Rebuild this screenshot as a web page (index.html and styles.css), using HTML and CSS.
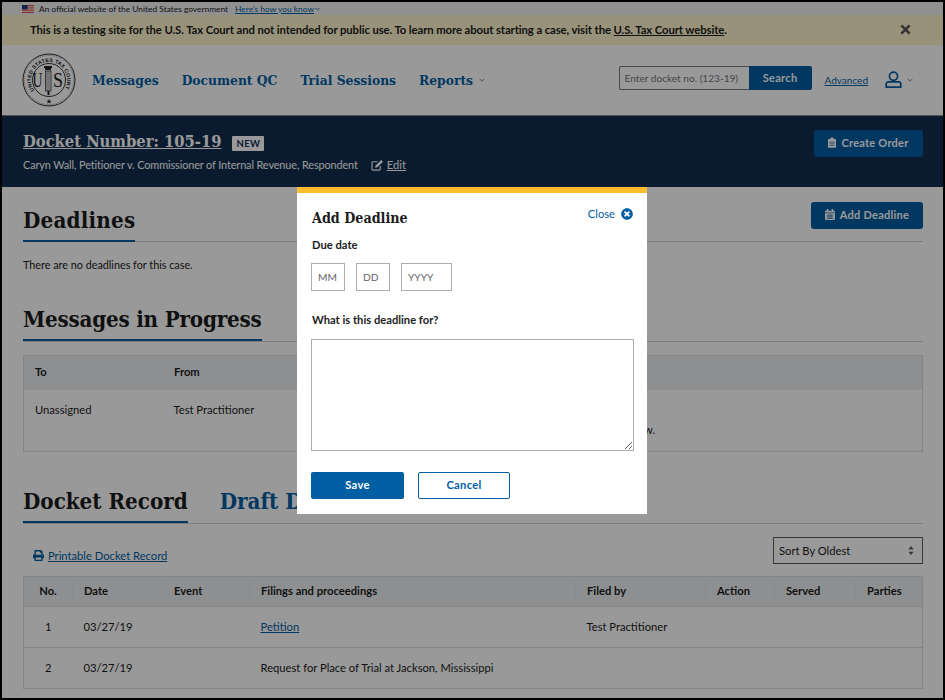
FILE: index.html
```html
<!DOCTYPE html>
<html lang="en">
<head>
<meta charset="utf-8">
<title>Docket 105-19</title>
<link rel="stylesheet" href="styles.css">
</head>
<body>
<div class="page">
  <div class="gov">
    <svg class="flag" viewBox="0 0 14 9" width="12" height="8"><rect width="14" height="9" fill="#d83933"/><rect y="1.3" width="14" height="1.3" fill="#fff"/><rect y="3.9" width="14" height="1.3" fill="#fff"/><rect y="6.5" width="14" height="1.3" fill="#fff"/><rect width="6.5" height="5" fill="#1a3a8a"/></svg>
    <span>An official website of the United States government</span>
    <a href="#" class="gov-link">Here’s how you know</a>
    <svg class="chev-tiny" viewBox="0 0 10 6" width="5" height="4"><path d="M1 1l4 4 4-4" fill="none" stroke="#005ea2" stroke-width="1.6"/></svg>
  </div>
  <div class="beta">
    <p>This is a testing site for the U.S. Tax Court and not intended for public use. To learn more about starting a case, visit the <a href="#">U.S. Tax Court website</a>.</p>
    <svg class="beta-x" viewBox="0 0 12 12" width="11" height="11"><path d="M1.5 1.5l9 9M10.5 1.5l-9 9" stroke="#555" stroke-width="2.8" fill="none"/></svg>
  </div>
  <header class="site">
    <svg class="seal" viewBox="0 0 54 54" width="54" height="54">
      <defs><path id="arc" d="M12.3 37.3a18 18 0 1 1 29.4 0"/></defs>
      <circle cx="27" cy="27" r="26" fill="#fff" stroke="#333" stroke-width="1"/>
      <circle cx="27" cy="27" r="24.6" fill="none" stroke="#555" stroke-width=".6" stroke-dasharray="1 1"/>
      <circle cx="27" cy="27" r="16.5" fill="none" stroke="#222" stroke-width=".9"/>
      <text class="seal-ring"><textPath href="#arc" textLength="76">UNITED STATES TAX COURT</textPath></text>
      <text x="10.5" y="33.5" class="seal-big" textLength="10" lengthAdjust="spacingAndGlyphs">U</text>
      <text x="31" y="33.5" class="seal-big" textLength="10" lengthAdjust="spacingAndGlyphs">S</text>
      <rect x="23.5" y="18" width="5.5" height="20" fill="#fff" stroke="#333" stroke-width=".8"/>
      <path d="M25 18v20M27 18v20" stroke="#555" stroke-width=".7"/>
      <path d="M22 13h8v2h-1v2h-6v-2h-1zM25.5 38h2v4h-2z" fill="#222"/>
      <path d="M27 46l.8 1.7h1.8l-1.4 1.1.5 1.8-1.7-1-1.7 1 .5-1.8-1.4-1.1h1.8z" fill="#222"/>
    </svg>
    <nav class="nav">
      <a href="#">Messages</a>
      <a href="#">Document QC</a>
      <a href="#">Trial Sessions</a>
      <a href="#" class="nav-last">Reports</a>
      <svg class="chev" viewBox="0 0 10 6" width="6" height="4"><path d="M1 1l4 4 4-4" fill="none" stroke="#71767a" stroke-width="1.4"/></svg>
    </nav>
    <form class="search">
      <input class="search-input" type="text" placeholder="Enter docket no. (123-19)">
      <button class="search-btn" type="button">Search</button>
    </form>
    <a href="#" class="advanced">Advanced</a>
    <svg class="user" viewBox="0 0 18 19" width="17" height="18"><circle cx="9" cy="5.5" r="4.3" fill="none" stroke="#005ea2" stroke-width="1.8"/><path d="M3.5 11.5h11a2.2 2.2 0 0 1 2.2 2.2v3.4H1.3v-3.4a2.2 2.2 0 0 1 2.2-2.2z" fill="none" stroke="#005ea2" stroke-width="1.8"/></svg>
    <svg class="chev" viewBox="0 0 10 6" width="6" height="4"><path d="M1 1l4 4 4-4" fill="none" stroke="#71767a" stroke-width="1.4"/></svg>
  </header>
  <section class="docket">
    <div class="docket-info">
      <div class="docket-line">
        <a href="#" class="docket-no">Docket Number: 105-19</a>
        <span class="tag">NEW</span>
      </div>
      <div class="docket-sub">
        <span>Caryn Wall, Petitioner v. Commissioner of Internal Revenue, Respondent</span>
        <svg class="edit-icon" viewBox="0 0 14 13" width="13" height="12"><path d="M10 7.5V11a1 1 0 0 1-1 1H2a1 1 0 0 1-1-1V4a1 1 0 0 1 1-1h5" fill="none" stroke="#fff" stroke-width="1.2"/><path d="M5 7l6-6 2 2-6 6-2.6.6z" fill="#fff"/></svg>
        <a href="#" class="edit">Edit</a>
      </div>
    </div>
    <button class="btn-primary btn-order" type="button">
      <svg viewBox="0 0 10 13" width="8" height="11"><path d="M1 2h2a2 2 0 0 1 4 0h2a1 1 0 0 1 1 1v9a1 1 0 0 1-1 1H1a1 1 0 0 1-1-1V3a1 1 0 0 1 1-1z" fill="#fff"/><path d="M2 6h6M2 8h6M2 10h6" stroke="#005ea2" stroke-width=".8"/></svg>
      Create Order
    </button>
  </section>
  <main class="main">
    <div class="title-row">
      <h2 class="tab-title">Deadlines</h2>
      <button class="btn-primary btn-deadline" type="button">
        <svg viewBox="0 0 12 13" width="10" height="11"><path d="M0 5h12v7a1 1 0 0 1-1 1H1a1 1 0 0 1-1-1zM1 2h1V0h2v2h4V0h2v2h1a1 1 0 0 1 1 1v1H0V3a1 1 0 0 1 1-1z" fill="#fff"/><path d="M2 7.3h8M2 9.3h8M2 11.3h8M4 6v6M6 6v6M8 6v6" stroke="#005ea2" stroke-width=".6"/></svg>
        Add Deadline
      </button>
    </div>
    <p class="empty">There are no deadlines for this case.</p>
    <div class="title-row title-row-msg">
      <h2 class="tab-title">Messages in Progress</h2>
    </div>
    <table class="grid grid-msg">
      <colgroup><col class="m1"><col class="m2"><col class="m3"><col></colgroup>
      <thead><tr><th>To</th><th>From</th><th>Received</th><th>Message</th></tr></thead>
      <tbody><tr>
        <td>Unassigned</td><td>Test Practitioner</td><td>03/27/19</td>
        <td>Petition filed<br>The petition is ready for your review.</td>
      </tr></tbody>
    </table>
    <div class="title-row title-row-rec">
      <h2 class="tab-title">Docket Record</h2>
      <a href="#" class="tab-link">Draft Documents</a>
    </div>
    <div class="toolbar">
      <a href="#" class="print">
        <svg viewBox="0 0 512 512" width="11" height="11"><path fill="#005ea2" d="M448 192V77.25c0-8.49-3.37-16.62-9.37-22.63L393.37 9.37c-6-6-14.14-9.37-22.63-9.37H96C78.33 0 64 14.33 64 32v160c-35.35 0-64 28.65-64 64v112c0 8.84 7.16 16 16 16h48v96c0 17.67 14.33 32 32 32h320c17.67 0 32-14.33 32-32v-96h48c8.84 0 16-7.16 16-16V256c0-35.35-28.65-64-64-64zm-64 256H128v-96h256v96zm0-224H128V64h192v48c0 8.84 7.16 16 16 16h48v96zm48 72c-13.25 0-24-10.75-24-24 0-13.26 10.75-24 24-24s24 10.74 24 24c0 13.25-10.75 24-24 24z"/></svg>
        <span>Printable Docket Record</span>
      </a>
      <div class="select-wrap">
        <select class="sort"><option>Sort By Oldest</option></select>
        <svg class="select-arrows" viewBox="0 0 8 12" width="6" height="9"><path d="M4 0l3.5 4.5h-7zM4 12L.5 7.5h7z" fill="#5c5c5c"/></svg>
      </div>
    </div>
    <table class="grid grid-rec">
      <colgroup><col class="r1"><col class="r2"><col class="r3"><col class="r4"><col class="r5"><col class="r6"><col class="r7"><col></colgroup>
      <thead><tr><th class="center">No.</th><th>Date</th><th>Event</th><th>Filings and proceedings</th><th>Filed by</th><th>Action</th><th>Served</th><th>Parties</th></tr></thead>
      <tbody>
        <tr><td class="center">1</td><td>03/27/19</td><td></td><td><a href="#">Petition</a></td><td>Test Practitioner</td><td></td><td></td><td></td></tr>
        <tr><td class="center">2</td><td>03/27/19</td><td></td><td>Request for Place of Trial at Jackson, Mississippi</td><td></td><td></td><td></td><td></td></tr>
      </tbody>
    </table>
  </main>
  <div class="overlay"></div>
  <div class="modal" role="dialog">
    <div class="modal-head">
      <h3>Add Deadline</h3>
      <a href="#" class="close">Close
        <svg viewBox="0 0 512 512" width="12" height="12"><path fill="#005ea2" d="M256 8C119 8 8 119 8 256s111 248 248 248 248-111 248-248S393 8 256 8zm121.6 313.1c4.7 4.7 4.7 12.3 0 17L338 377.6c-4.7 4.7-12.3 4.7-17 0L256 312l-65.1 65.6c-4.7 4.7-12.3 4.7-17 0L134.4 338c-4.7-4.7-4.7-12.3 0-17l65.6-65-65.6-65.1c-4.7-4.7-4.7-12.3 0-17l39.6-39.6c4.7-4.7 12.3-4.7 17 0l65 65.7 65.1-65.6c4.7-4.7 12.3-4.7 17 0l39.6 39.6c4.7 4.7 4.7 12.3 0 17L312 256l65.6 65.1z"/></svg>
      </a>
    </div>
    <label class="lbl lbl-date">Due date</label>
    <div class="date-row">
      <input class="date date-s" type="text" placeholder="MM">
      <input class="date date-s" type="text" placeholder="DD">
      <input class="date date-y" type="text" placeholder="YYYY">
    </div>
    <label class="lbl lbl-what">What is this deadline for?</label>
    <textarea class="area"></textarea>
    <div class="actions">
      <button class="m-btn m-save" type="button">Save</button>
      <button class="m-btn m-cancel" type="button">Cancel</button>
    </div>
  </div>
</div>
</body>
</html>
```
FILE: styles.css
```css
* { box-sizing: border-box; }
html, body { margin: 0; height: 100%; background: #000; }
body { padding: 2px; overflow: hidden; }
.page {
  position: relative;
  height: 696px;
  overflow: hidden;
  background: #fff;
  color: #1b1b1b;
  font-family: "Lato", "Liberation Sans", sans-serif;
  font-size: 12px;
}
a { color: #005ea2; }

.gov {
  height: 13px;
  background: #f0f0f0;
  display: flex;
  align-items: center;
  padding-left: 20px;
  font-size: 8.4px;
}
.flag { margin-right: 5px; }
.gov-link { margin-left: 7px; }
.chev-tiny { margin-left: 1px; }

.beta {
  height: 30px;
  background: #fdf3cb;
  display: flex;
  align-items: center;
  justify-content: space-between;
  padding: 0 32px 2px 28px;
}
.beta p { margin: 0; font-weight: 700; font-size: 11.3px; letter-spacing: -.09px; }
.beta a { color: #1b1b1b; }

.site {
  height: 71px;
  border-bottom: 1px solid #8a8a8a;
  display: flex;
  align-items: center;
  padding: 0 30px 0 20px;
}
.seal { flex: none; }
.seal-ring { font: 700 5.2px "Liberation Sans", sans-serif; fill: #222; }
.seal-big { font: 400 21px "Liberation Serif", serif; fill: #222; }
.nav { display: flex; align-items: center; margin-left: 16px; flex: 1; }
.nav a {
  font-family: "DejaVu Serif Condensed", "DejaVu Serif", serif;
  font-weight: 700;
  font-size: 13.7px;
  text-decoration: none;
  margin-right: 23px;
}
.nav a.nav-last { margin-right: 6px; }
.search { display: flex; height: 24px; margin: 0 13px 4px 0; }
.search-input {
  width: 130px;
  border: 1px solid #7a7a7a;
  border-right: 0;
  border-radius: 2px 0 0 2px;
  padding: 0 5px;
  font: 10.1px "Lato", sans-serif;
  background: #fff;
  color: #1b1b1b;
}
.search-input::placeholder { color: #71767a; opacity: 1; }
.search-btn {
  width: 63px;
  border: 0;
  border-radius: 0 2px 2px 0;
  background: #005ea2;
  color: #fff;
  font: 700 11px "Lato", sans-serif;
  letter-spacing: .3px;
  padding: 0 0 2px;
}
.advanced { font-size: 10px; margin-right: 17px; }
.user { margin-right: 5px; }

.docket {
  height: 71px;
  background: #112e51;
  color: #fff;
  display: flex;
  justify-content: space-between;
  align-items: flex-start;
  padding: 14px 20px 0 21px;
}
.docket-line { display: flex; align-items: center; gap: 11px; }
.docket-no {
  color: #fff;
  font-family: "DejaVu Serif Condensed", "DejaVu Serif", serif;
  font-weight: 700;
  font-size: 16.4px;
  line-height: 24px;
}
.tag {
  background: #fff;
  color: #112e51;
  font-weight: 700;
  font-size: 9.5px;
  letter-spacing: .4px;
  height: 15px;
  width: 32px;
  display: flex;
  align-items: center;
  justify-content: center;
  border-radius: 1px;
  margin-top: 3px;
}
.docket-sub { display: flex; align-items: center; margin-top: 3px; font-size: 10.9px; letter-spacing: -.12px; line-height: 16px; }
.edit-icon { margin-left: 13px; margin-right: 3px; }
.edit { color: #fff; font-size: 11.2px; letter-spacing: 0; }

.btn-primary {
  border: 0;
  border-radius: 3px;
  background: #005ea2;
  color: #fff;
  height: 27px;
  font: 700 11px "Lato", sans-serif;
  letter-spacing: .25px;
  display: flex;
  align-items: center;
  justify-content: center;
  gap: 5px;
  padding: 0 0 2px;
}
.btn-order { width: 109px; }
.btn-deadline { width: 112px; margin-top: 15px; }

.main { padding: 0 20px 0 21px; }
.title-row {
  display: flex;
  justify-content: space-between;
  align-items: flex-start;
  height: 55px;
  border-bottom: 1px solid #cfcfcf;
}
.tab-title {
  margin: 16px 0 -1px;
  height: 39px;
  font-family: "DejaVu Serif Condensed", "DejaVu Serif", serif;
  font-weight: 700;
  font-size: 22.2px;
  line-height: 34px;
  letter-spacing: .2px;
  border-bottom: 2px solid #005ea2;
}
.empty { margin: 0; height: 60px; padding-top: 15px; font-size: 10.8px; line-height: 15px; }
.title-row-msg { height: 40px; }
.title-row-msg .tab-title, .title-row-rec .tab-title { margin-top: 0; }
.title-row-msg .tab-title { letter-spacing: -.2px; }
.title-row-rec .tab-title { letter-spacing: 0; }
.title-row-rec { height: 40px; margin-top: 32px; gap: 32px; justify-content: flex-start; }
.tab-link {
  font-family: "DejaVu Serif Condensed", "DejaVu Serif", serif;
  font-weight: 700;
  font-size: 22.2px;
  line-height: 34px;
  text-decoration: none;
  white-space: nowrap;
}

.grid {
  width: 900px;
  table-layout: fixed;
  border-collapse: collapse;
  border: 1px solid #dcdcdc;
  font-size: 11.2px;
}
.grid th { background: #edeff0; text-align: left; font-weight: 700; padding: 0 11px 2px; border-left: 1px solid #e6e8e9; }
.grid th:first-child { border-left: 0; }
.grid td { padding: 0 11px 2px; }
.grid .center { text-align: center; padding: 0 0 2px; }
.grid-msg { margin-top: 13px; }
.grid-msg th { height: 34px; }
.grid-msg td { height: 62px; vertical-align: top; padding-top: 10px; line-height: 20px; white-space: nowrap; }
.m1 { width: 139px; }
.m2 { width: 148px; }
.m3 { width: 154px; }

.toolbar { display: flex; justify-content: space-between; align-items: center; height: 52px; padding: 0 0 0 10px; }
.print { display: flex; align-items: center; gap: 4px; font-size: 11.2px; margin-top: 11px; }
.select-wrap { position: relative; height: 27px; }
.sort {
  appearance: none;
  width: 150px;
  height: 27px;
  border: 1px solid #5c5c5c;
  border-radius: 0;
  background: #fff;
  color: #1b1b1b;
  padding: 0 5px;
  font: 11.2px "Lato", sans-serif;
}
.select-arrows { position: absolute; right: 9px; top: 9px; }

.grid-rec tr { border-bottom: 1px solid #dcdcdc; }
.grid-rec th { height: 30px; }
.grid-rec td { height: 41px; }
.r1 { width: 49px; }
.r2 { width: 90px; }
.r3 { width: 87px; }
.r4 { width: 326px; }
.r5 { width: 130px; }
.r6 { width: 69px; }
.r7 { width: 81px; }

.overlay { position: absolute; inset: 0; background: rgba(0, 0, 0, .4); }
.modal {
  position: absolute;
  left: 295px;
  top: 185px;
  width: 350px;
  height: 327px;
  background: #fff;
  border-top: 6px solid #ffbc2b;
  padding: 0 14px;
}
.modal-head { display: flex; justify-content: space-between; align-items: flex-start; padding: 14px 0 0 1px; }
.modal-head h3 {
  margin: 0;
  font-family: "DejaVu Serif Condensed", "DejaVu Serif", serif;
  font-weight: 700;
  font-size: 14.2px;
  line-height: 22px;
}
.close { display: flex; align-items: center; gap: 6px; text-decoration: none; font-size: 11.2px; line-height: 14px; }
.lbl { display: block; font-weight: 700; font-size: 11.2px; line-height: 15px; margin-left: 1px; }
.lbl-date { margin-top: 8px; }
.date-row { display: flex; gap: 11px; margin-top: 11px; }
.date {
  height: 28px;
  border: 1px solid #a9aeb1;
  padding: 0 6px;
  font: 10.2px "Lato", sans-serif;
  background: #fff;
}
.date::placeholder { color: #5f6366; opacity: 1; }
.date-s { width: 34px; }
.date-y { width: 51px; }
.lbl-what { margin-top: 21px; }
.area {
  display: block;
  width: 323px;
  height: 112px;
  margin-top: 12px;
  border: 1px solid #a9aeb1;
  background: #fff;
}
.actions { display: flex; gap: 14px; margin-top: 21px; }
.m-btn { height: 27px; width: 93px; border-radius: 2px; font: 700 11.2px "Lato", sans-serif; letter-spacing: .3px; padding: 0 0 3px; }
.m-save { background: #005ea2; border: 0; color: #fff; }
.m-cancel { background: #fff; border: 1px solid #005ea2; color: #005ea2; width: 92px; }
```
